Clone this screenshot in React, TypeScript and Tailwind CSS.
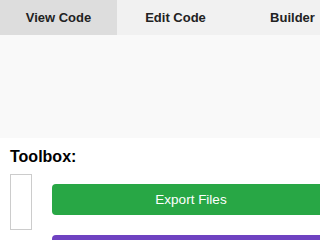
import { useState } from 'react';

const TABS = ['View Code', 'Edit Code', 'Builder'];

export default function App() {
  const [tab, setTab] = useState('View Code');

  return (
    <div className="w-[320px] h-[240px] overflow-hidden bg-white font-['Liberation_Sans',Arial,sans-serif] text-black">
      <div className="flex h-[35px] bg-[#f1f1f1]">
        {TABS.map((t) => (
          <button
            key={t}
            type="button"
            onClick={() => setTab(t)}
            className={`w-[117px] shrink-0 flex items-center justify-center text-[13px] font-bold text-[#222] ${
              tab === t ? 'bg-[#dddddd]' : 'bg-[#f1f1f1]'
            }`}
          >
            {t}
          </button>
        ))}
      </div>

      <div className="h-[103px] bg-[#f9f9f9]" />

      <div className="px-[10px] pt-[10px]">
        <div className="text-[16px] font-bold leading-[18px]">Toolbox:</div>
        <div className="flex mt-[8px]">
          <div className="w-[22px] h-[56px] shrink-0 border border-[#cccccc] bg-white" />
          <div className="flex flex-col gap-[20px] ml-[20px] mt-[10px] w-[278px] shrink-0">
            <button
              type="button"
              className="h-[31px] rounded-[4px] bg-[#28a745] text-white text-[13.5px] leading-none"
            >
              Export Files
            </button>
            <button
              type="button"
              className="h-[31px] rounded-[4px] bg-[#6f42c1] text-white text-[13.5px] leading-none"
            >
              Import Files
            </button>
          </div>
        </div>
      </div>
    </div>
  );
}
